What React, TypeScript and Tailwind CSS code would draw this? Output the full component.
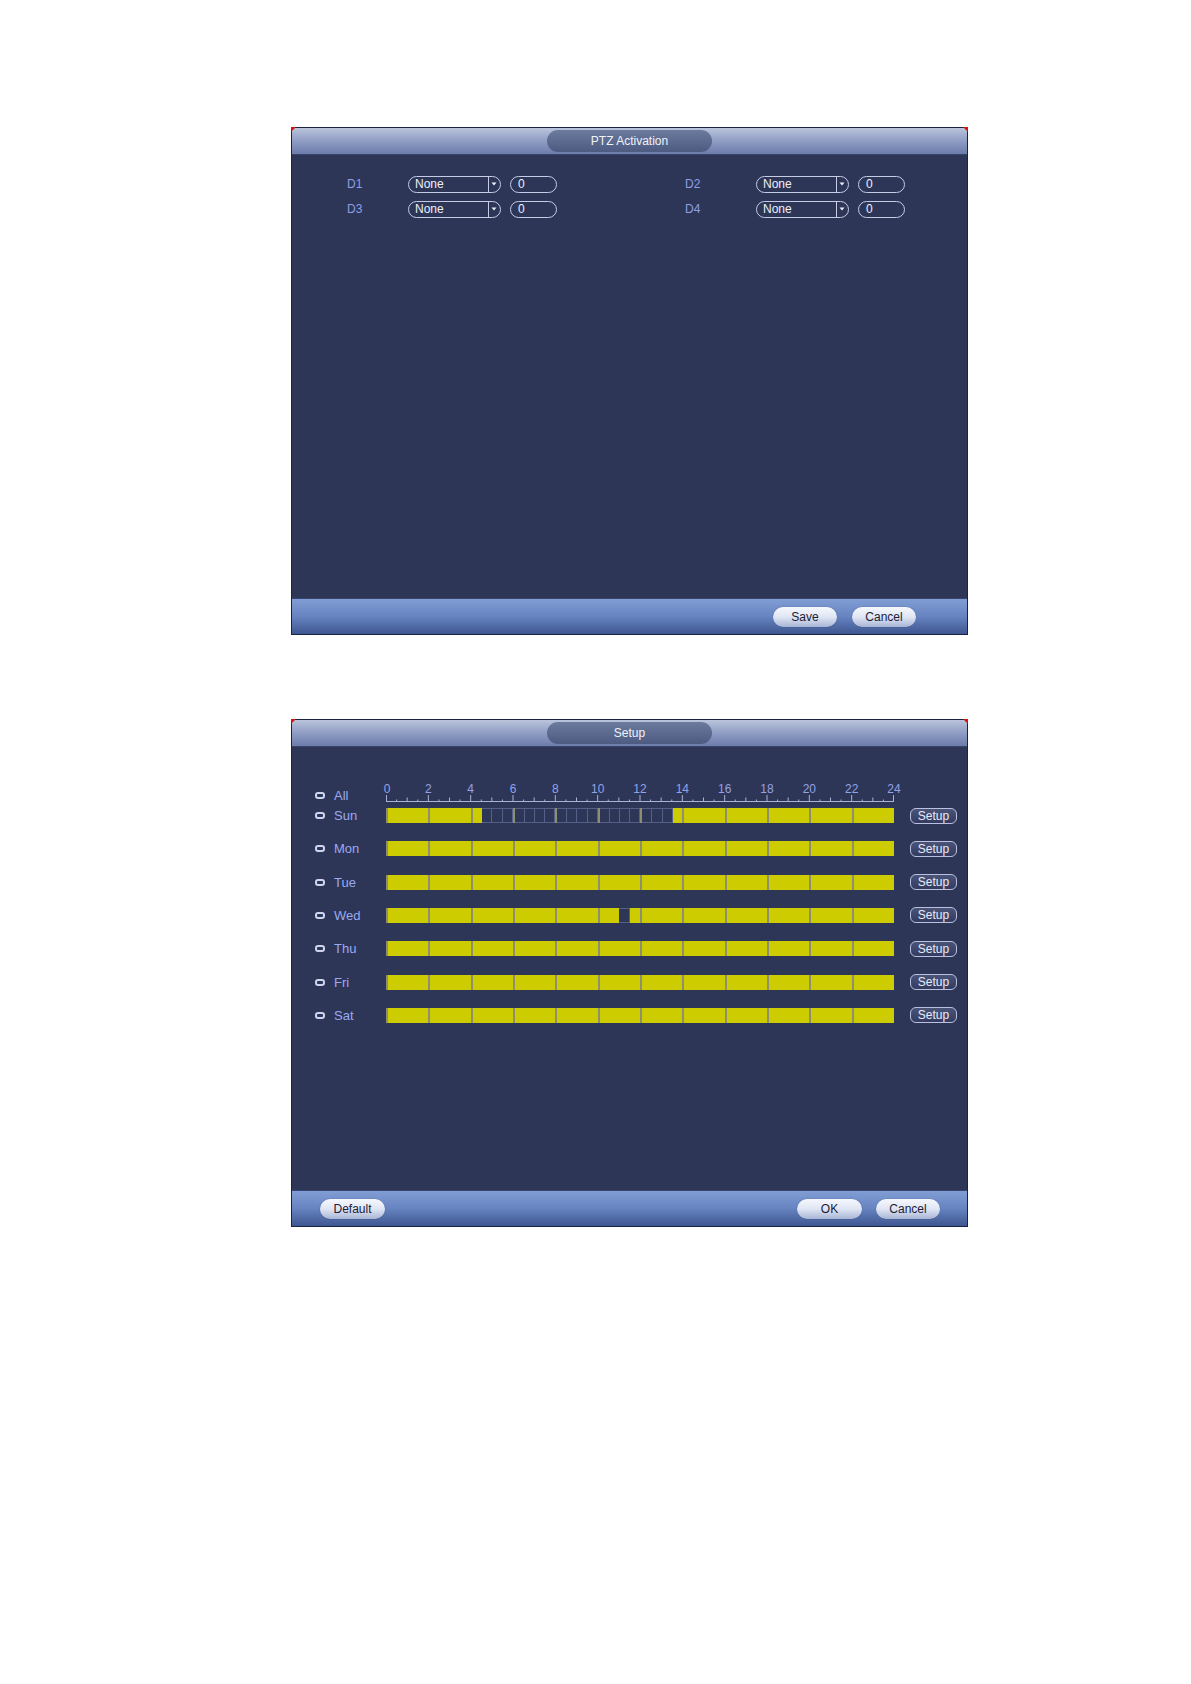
import React from 'react';

const HOUR_PX = 508 / 24;

type Day = { name: string; off?: [number, number][] };

const days: Day[] = [
  { name: 'Sun', off: [[4.5, 13.5]] },
  { name: 'Mon' },
  { name: 'Tue' },
  { name: 'Wed', off: [[11, 11.5]] },
  { name: 'Thu' },
  { name: 'Fri' },
  { name: 'Sat' },
];

const Panel: React.FC<{ title: string; footer: React.ReactNode; children: React.ReactNode }> = ({
  title,
  footer,
  children,
}) => (
  <div className="relative w-[677px] border border-[#1c2340] bg-[#2e3658] flex flex-col">
    {/* title bar */}
    <div className="h-[27px] bg-linear-to-b from-[#bac4dc] via-[#8f9dc4] to-[#6c7cab] border-b border-[#3a4468] flex items-center justify-center">
      <div className="w-[165px] h-[22px] rounded-full bg-linear-to-b from-[#6c7a9d] to-[#4d5b82] flex items-center justify-center text-[12px] text-[#f0f2f8]">
        {title}
      </div>
    </div>
    <div className="h-[443px]">{children}</div>
    <div className="h-[36px] border-t border-[#39456e] bg-linear-to-b from-[#819dd4] via-[#6684c1] to-[#3f5791] flex items-center">
      {footer}
    </div>
    {/* red corner marks */}
    <div className="absolute -top-px -left-px w-0 h-0 border-t-[5px] border-r-[5px] border-t-[#d21414] border-r-transparent" />
    <div className="absolute -top-px -right-px w-0 h-0 border-t-[5px] border-l-[5px] border-t-[#d21414] border-l-transparent" />
  </div>
);

const PillButton: React.FC<{ label: string; w?: string }> = ({ label, w = 'w-[64px]' }) => (
  <div
    className={`${w} h-[20px] rounded-full bg-linear-to-b from-[#f6f8fd] via-[#dfe5f3] to-[#a9b5d6] shadow-[0_0_1px_rgba(20,30,60,0.6)] flex items-center justify-center text-[12px] text-[#1b2035]`}
  >
    {label}
  </div>
);

const Select = () => (
  <div className="w-[93px] h-[17px] rounded-full border border-[#c6cce6] flex items-center overflow-hidden">
    <span className="flex-1 pl-[6px] text-[12px] leading-none text-[#eceff8]">None</span>
    <div className="w-[12px] h-full border-l border-[#c6cce6] flex items-center justify-center pr-[2px]">
      <svg width="6" height="4" viewBox="0 0 6 4">
        <path d="M0.5 0.5 L5.5 0.5 L3 3.5 Z" fill="#eef0f8" />
      </svg>
    </div>
  </div>
);

const NumInput = () => (
  <div className="w-[47px] h-[17px] rounded-full border border-[#c6cce6] flex items-center pl-[7px] text-[12px] leading-none text-[#eceff8]">
    0
  </div>
);

const PtzGroup: React.FC<{ label: string; labelW: string }> = ({ label, labelW }) => (
  <div className="flex items-center">
    <span className={`${labelW} text-[12px] text-[#8e9fe2]`}>{label}</span>
    <Select />
    <div className="ml-[9px]">
      <NumInput />
    </div>
  </div>
);

const CheckBox = () => <div className="w-[10px] h-[7px] rounded-[3px] border-2 border-[#cdd4ee]" />;

const Ruler = () => {
  const ticks = [];
  for (let i = 0; i <= 48; i++) {
    const x = Math.min(Math.max(i * (HOUR_PX / 2), 0.5), 507.5);
    const y1 = i % 4 === 0 ? 12 : i % 2 === 0 ? 14.5 : 16.5;
    ticks.push(<line key={i} x1={x} x2={x} y1={y1} y2={18} stroke="#a9b2d4" strokeWidth="1" />);
  }
  const labels = [];
  for (let h = 0; h <= 24; h += 2) {
    labels.push(
      <text
        key={h}
        x={h * HOUR_PX + (h === 0 ? 1 : 0)}
        y={10}
        textAnchor="middle"
        fontSize="12"
        fill="#93a3e6"
        fontFamily="'Liberation Sans', Arial, sans-serif"
      >
        {h}
      </text>
    );
  }
  return (
    <svg width="508" height="20" viewBox="0 0 508 20" className="overflow-visible block">
      <line x1="0" x2="508" y1="18.5" y2="18.5" stroke="#a9b2d4" strokeWidth="1" />
      {ticks}
      {labels}
    </svg>
  );
};

const isOn = (day: Day, h: number) => !(day.off || []).some(([a, b]) => h >= a && h < b);

const DayBar: React.FC<{ day: Day }> = ({ day }) => (
  <div className="w-[508px] h-[15px] flex">
    {Array.from({ length: 12 }).map((_, g) => (
      <div key={g} className="flex-1 flex border-l-2 border-[#8d8f70]">
        {Array.from({ length: 4 }).map((_, c) => {
          const h = g * 2 + c * 0.5;
          return isOn(day, h) ? (
            <div key={c} className="flex-1 bg-[#cccc00]" />
          ) : (
            <div key={c} className="flex-1 border-y border-r border-[#56618a]" />
          );
        })}
      </div>
    ))}
  </div>
);

const SetupButton = () => (
  <div className="w-[47px] h-[16px] rounded-[6px] border border-[#b9c1de] bg-linear-to-b from-[#4a5478] to-[#333c60] flex items-center justify-center text-[12px] leading-none text-[#e8ebf6]">
    Setup
  </div>
);

export default function App() {
  return (
    <div className="w-[1191px] h-[1684px] bg-white font-['Liberation_Sans',Arial,sans-serif]">
      <div className="pt-[127px] pl-[291px] flex flex-col gap-[84px]">
        <Panel
          title="PTZ Activation"
          footer={
            <div className="flex-1 flex justify-end gap-[15px] pr-[51px]">
              <PillButton label="Save" />
              <PillButton label="Cancel" />
            </div>
          }
        >
          <div className="pt-[20px] pl-[55px] grid grid-cols-[338px_auto] gap-y-[7px]">
            <PtzGroup label="D1" labelW="w-[61px]" />
            <PtzGroup label="D2" labelW="w-[71px]" />
            <PtzGroup label="D3" labelW="w-[61px]" />
            <PtzGroup label="D4" labelW="w-[71px]" />
          </div>
        </Panel>

        <Panel
          title="Setup"
          footer={
            <div className="flex-1 flex items-center pl-[28px] pr-[27px]">
              <PillButton label="Default" w="w-[65px]" />
              <div className="flex-1" />
              <div className="flex gap-[14px]">
                <PillButton label="OK" w="w-[65px]" />
                <PillButton label="Cancel" />
              </div>
            </div>
          }
        >
          <div className="pt-[36px] pl-[23px] flex flex-col">
            <div className="flex items-end h-[20px]">
              <div className="w-[71px] flex items-center gap-[9px] leading-[15px]">
                <CheckBox />
                <span className="text-[13px] text-[#9aaaf0]">All</span>
              </div>
              <Ruler />
            </div>
            <div className="mt-[5px] flex flex-col gap-[18.33px]">
              {days.map((d) => (
                <div key={d.name} className="flex items-center h-[15px]">
                  <div className="w-[71px] flex items-center gap-[9px]">
                    <CheckBox />
                    <span className="text-[13px] leading-[15px] text-[#9aaaf0]">{d.name}</span>
                  </div>
                  <DayBar day={d} />
                  <div className="ml-[16px]">
                    <SetupButton />
                  </div>
                </div>
              ))}
            </div>
          </div>
        </Panel>
      </div>
    </div>
  );
}
